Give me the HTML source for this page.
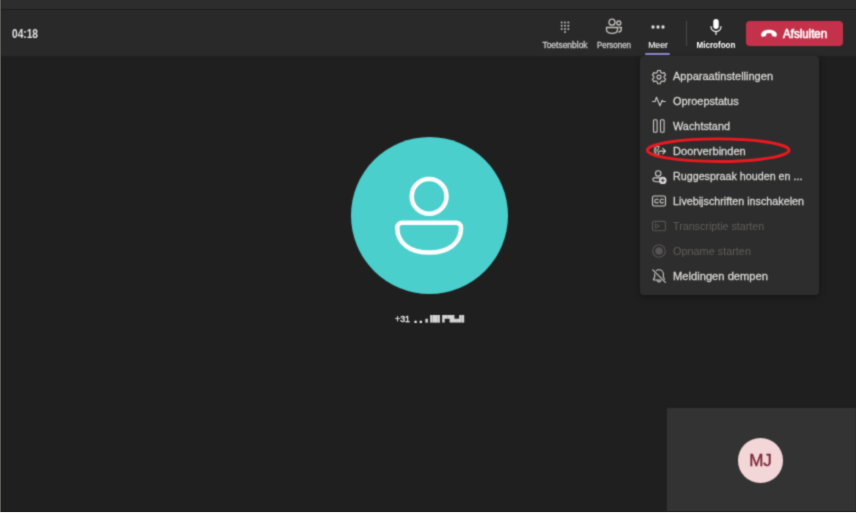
<!DOCTYPE html>
<html lang="nl">
<head>
<meta charset="utf-8">
<title>Teams gesprek</title>
<style>
*{box-sizing:border-box;margin:0;padding:0}
html,body{position:relative;width:857px;height:513px;overflow:hidden;background:#1f1f1f;font-family:"Liberation Sans",sans-serif;}
#root{position:relative;width:857px;height:513px;background:#1f1f1f;overflow:hidden;filter:url(#soft)}
.abs{position:absolute}
#topband{left:0;top:0;width:857px;height:9px;background:#2d2d2d}
#topline{left:0;top:8.800px;width:857px;height:1.700px;background:#1c1c1c}
#header{left:0;top:10px;width:857px;height:46.300px;background:#292929}
#leftedge{left:0;top:0;width:1px;height:513px;background:#5c5c59}
#rightedge{left:856px;top:0;width:1px;height:513px;background:#fff}
#bottomedge{left:0;top:512px;width:857px;height:1px;background:#f0f0f0}
#bottomshadow{left:1px;top:511px;width:855px;height:1px;background:#202020}
#timer{left:12px;top:27px;font-size:12px;font-weight:bold;color:#e4e4e4;line-height:14px;transform:scaleX(0.847);transform-origin:0 50%}
.tb{position:absolute;top:39.500px;font-size:8.4px;color:#cacaca;-webkit-text-stroke:0.3px #cacaca;line-height:10px;text-align:center;white-space:nowrap;transform:translateX(-50%)}
.tb.b{color:#fff;font-weight:bold;-webkit-text-stroke:0}
#underline{left:645px;top:53px;width:25px;height:2px;background:#8b8cd8;border-radius:1px}
#divider{left:685.500px;top:21px;width:1px;height:25px;background:#484848}
#endbtn{left:746px;top:21px;width:97.200px;height:25px;background:#c4314b;border-radius:4px}
#endtxt{left:783px;top:27px;font-size:12px;font-weight:normal;-webkit-text-stroke:0.6px #fff;color:#fff;line-height:14px;transform:scaleX(0.960);transform-origin:0 50%}
#menu{left:640px;top:55.500px;width:179px;height:239px;background:#2d2d2d;border-radius:4px;box-shadow:0 2px 6px rgba(0,0,0,.35)}
.mi{position:absolute;left:673px;font-size:11.5px;color:#dcdbd9;line-height:14px;white-space:nowrap;font-weight:normal;-webkit-text-stroke:0.28px #dcdbd9;transform-origin:0 50%}
.mi.dis{color:#605e5c;font-weight:normal;-webkit-text-stroke:0}
.ic{position:absolute;left:651px;width:16px;height:16px}
#avatar{left:351px;top:137px;width:157px;height:157px;border-radius:50%;background:#4bcfcc}
#phone{left:395px;top:314px;font-size:8.5px;color:#ececec;-webkit-text-stroke:0.35px #ececec;line-height:10px;white-space:nowrap;transform:scaleX(1.033);transform-origin:0 50%}
#dots{left:413.400px;top:309.800px;font-size:15px;font-weight:bold;color:#f4f4f4;line-height:16px;white-space:nowrap;word-spacing:-3.100px}
#blocks{left:422.600px;top:314px;font-size:6.400px;color:#d4d4d4;line-height:10px;white-space:nowrap;font-family:"DejaVu Sans",sans-serif;transform:scaleX(0.983);transform-origin:0 50%}
#self{left:667px;top:408px;width:189px;height:104px;background:#333333}
#mj{left:738.200px;top:438.300px;width:44.500px;height:44.500px;border-radius:50%;background:#f3d6d8}
#mjt{left:738px;top:438px;width:45px;height:45px;color:#7a2a38;-webkit-text-stroke:0.35px #7a2a38;font-size:15.800px;text-align:center;line-height:46.500px;transform:scaleX(1.080)}
</style>
</head>
<body>
<svg width="0" height="0" style="position:absolute"><filter id="soft" x="0" y="0" width="100%" height="100%" color-interpolation-filters="sRGB"><feConvolveMatrix order="3" kernelMatrix="0.0322 0.1151 0.0322 0.1151 0.4109 0.1151 0.0322 0.1151 0.0322" divisor="1" edgeMode="duplicate" preserveAlpha="true"/></filter></svg>
<div id="root">
  <div class="abs" id="topband"></div>
  <div class="abs" id="topline"></div>
  <div class="abs" id="header"></div>

  <div class="abs" id="timer">04:18</div>

  <!-- Toetsenblok icon -->
  <svg class="abs" style="left:558px;top:20px" width="14" height="16" viewBox="0 0 14 16">
    <g fill="#bdbdbd">
      <circle cx="3.700" cy="2.5" r="1"/><circle cx="7" cy="2.5" r="1"/><circle cx="10.300" cy="2.5" r="1"/>
      <circle cx="3.700" cy="5.7" r="1"/><circle cx="7" cy="5.7" r="1"/><circle cx="10.300" cy="5.7" r="1"/>
      <circle cx="3.700" cy="8.9" r="1"/><circle cx="7" cy="8.9" r="1"/><circle cx="10.300" cy="8.9" r="1"/>
      <circle cx="7" cy="12.1" r="1"/>
    </g>
  </svg>
  <div class="tb" style="left:565px;transform:translateX(-50%) scaleX(1.010)">Toetsenblok</div>

  <!-- Personen icon -->
  <svg class="abs" style="left:604px;top:18px" width="20" height="17" viewBox="0 0 20 17">
    <g fill="none" stroke="#c6c4c0" stroke-width="1.3">
      <circle cx="8" cy="4.2" r="3"/>
      <circle cx="14.8" cy="5" r="2"/>
      <path d="M2.5 9.5h11v2.2c0 2-2 3.6-5.5 3.6s-5.500-1.600-5.500-3.600z" stroke-linejoin="round"/>
      <path d="M14.500 9.500h2.800v1.800c0 1.500-1.200 2.700-3 2.900"/>
    </g>
  </svg>
  <div class="tb" style="left:614px;transform:translateX(-50%) scaleX(0.950)">Personen</div>

  <!-- Meer -->
  <svg class="abs" style="left:649.700px;top:24px" width="16" height="6" viewBox="0 0 16 6">
    <g fill="#e0e0e0"><circle cx="3" cy="3" r="1.650"/><circle cx="8" cy="3" r="1.650"/><circle cx="13" cy="3" r="1.650"/></g>
  </svg>
  <div class="tb" style="left:657.800px;color:#f0f0f0;-webkit-text-stroke:0.15px #f0f0f0;transform:translateX(-50%) scaleX(1.030)">Meer</div>
  <div class="abs" id="underline"></div>
  <div class="abs" id="divider"></div>

  <!-- Microfoon -->
  <svg class="abs" style="left:709px;top:18px" width="14" height="18" viewBox="0 0 14 18">
    <rect x="4.300" y="1" width="5.400" height="10" rx="2.700" fill="#fff"/>
    <path d="M2 8.500c0 3 2.200 5 5 5s5-2 5-5" fill="none" stroke="#fff" stroke-width="1.200" stroke-linecap="round"/>
    <path d="M7 13.500v3" stroke="#fff" stroke-width="1.200" stroke-linecap="round"/>
  </svg>
  <div class="tb b" style="left:716.300px;transform:translateX(-50%) scaleX(0.960)">Microfoon</div>

  <!-- Afsluiten -->
  <div class="abs" id="endbtn"></div>
  <svg class="abs" style="left:760px;top:27.600px" width="18" height="11" viewBox="0 0 18 10" preserveAspectRatio="none">
    <path d="M1.200 6.200C1 3.500 4.500 1.500 9 1.500s8 2 7.800 4.700c-.1 1.300-.7 2-1.700 1.800l-2.200-.4c-.8-.2-1.200-.8-1.200-1.600V5.200c-1.700-.6-3.700-.6-5.400 0V6c0 .8-.4 1.400-1.200 1.600l-2.200.4c-1 .2-1.600-.5-1.700-1.800z" fill="#fff"/>
  </svg>
  <div class="abs" id="endtxt">Afsluiten</div>

  <!-- Menu -->
  <div class="abs" id="menu"></div>

  <!-- gear -->
  <svg class="ic" style="top:68.500px" viewBox="0 0 16 16">
    <path d="M6.600 1.500h2.800l.5 2 1.300.7 2-.6 1.400 2.400-1.500 1.400v1.400l1.500 1.400-1.400 2.400-2-.6-1.300.7-.5 2H6.600l-.5-2-1.300-.7-2 .6-1.400-2.400 1.500-1.400V7.400L1.400 6l1.400-2.400 2 .6 1.300-.7z" fill="none" stroke="#cfcdc9" stroke-width="1.100" stroke-linejoin="round"/>
    <circle cx="8" cy="8.100" r="2" fill="none" stroke="#cfcdc9" stroke-width="1.100"/>
  </svg>
  <div class="mi" style="top:69px;transform:scaleX(0.96)">Apparaatinstellingen</div>

  <!-- pulse -->
  <svg class="ic" style="top:93px" viewBox="0 0 16 16">
    <path d="M1.600 8.500H4L5.500 4.300L8.900 12.700L11.200 7.200L12 8.500H14.300" fill="none" stroke="#cfcdc9" stroke-width="1.100" stroke-linejoin="round" stroke-linecap="round"/>
  </svg>
  <div class="mi" style="top:94px;transform:scaleX(0.951)">Oproepstatus</div>

  <!-- pause -->
  <svg class="ic" style="top:118px" viewBox="0 0 16 16">
    <rect x="2.500" y="1.800" width="3.600" height="12.400" rx="1" fill="none" stroke="#cfcdc9" stroke-width="1.100"/>
    <rect x="9.500" y="1.800" width="3.600" height="12.400" rx="1" fill="none" stroke="#cfcdc9" stroke-width="1.100"/>
  </svg>
  <div class="mi" style="top:119px;transform:scaleX(0.945)">Wachtstand</div>

  <!-- transfer -->
  <svg class="ic" style="top:143px" viewBox="0 0 16 16">
    <path d="M8.200 3.600C5 2.900 3.300 3.900 3.300 7.400C3.300 10.900 5 11.900 8.200 11.200L6.600 7.400Z" fill="none" stroke="#cfcdc9" stroke-width="1" stroke-linejoin="round"/>
    <path d="M4.900 4.900V9.900" fill="none" stroke="#cfcdc9" stroke-width="1" stroke-linecap="round"/>
    <path d="M8.400 8.100H14.200M11.800 5.400L14.500 8.100L11.800 10.800" fill="none" stroke="#d6d4d0" stroke-width="1.100" stroke-linecap="round" stroke-linejoin="round"/>
  </svg>
  <div class="mi" style="top:144px;transform:scaleX(0.965)">Doorverbinden</div>
  <!-- red ellipse annotation -->
  <svg class="abs" style="left:640px;top:134px" width="160" height="34" viewBox="0 0 160 34">
    <ellipse cx="78.200" cy="16.200" rx="70.800" ry="11.300" fill="none" stroke="#ee1820" stroke-width="2.900"/>
  </svg>

  <!-- consult -->
  <svg class="ic" style="top:168px" viewBox="0 0 16 16">
    <circle cx="7.200" cy="5.400" r="2.700" fill="none" stroke="#cfcdc9" stroke-width="1.100"/>
    <path d="M8.500 9.900H3.300C2.400 9.900 1.800 10.500 1.800 11.300C1.800 12.900 3.400 13.700 6 13.700H8" fill="none" stroke="#cfcdc9" stroke-width="1.100" stroke-linecap="round"/>
    <circle cx="11.800" cy="12.400" r="3.700" fill="#dddbd8"/>
    <path d="M11.800 10.500v3.800M9.900 12.400h3.800" stroke="#2e2e2e" stroke-width="1"/>
  </svg>
  <div class="mi" style="top:169px;transform:scaleX(0.933)">Ruggespraak houden en ...</div>

  <!-- cc -->
  <svg class="ic" style="top:193px" viewBox="0 0 16 16">
    <rect x="1.500" y="3" width="13" height="10" rx="1.800" fill="none" stroke="#cfcdc9" stroke-width="1.100"/>
    <path d="M7 6.700c-.4-.5-.9-.7-1.500-.7-1 0-1.800.8-1.800 2s.8 2 1.800 2c.6 0 1.100-.2 1.500-.7M12.300 6.700c-.4-.5-.9-.7-1.500-.7-1 0-1.800.8-1.800 2s.8 2 1.800 2c.6 0 1.100-.2 1.500-.7" fill="none" stroke="#cfcdc9" stroke-width="1.100" stroke-linecap="round"/>
  </svg>
  <div class="mi" style="top:194px;transform:scaleX(0.936)">Livebijschriften inschakelen</div>

  <!-- transcript (disabled) -->
  <svg class="ic" style="top:218px" viewBox="0 0 16 16">
    <rect x="1.500" y="3.400" width="13" height="9.400" rx="1.800" fill="none" stroke="#575552" stroke-width="1.100"/>
    <path d="M4.300 5.600v4.800l4-2.400z" fill="none" stroke="#575552" stroke-width="1" stroke-linejoin="round"/>
  </svg>
  <div class="mi dis" style="top:219px;transform:scaleX(0.931)">Transcriptie starten</div>

  <!-- record (disabled) -->
  <svg class="ic" style="top:243px" viewBox="0 0 16 16">
    <circle cx="8" cy="8" r="6.300" fill="none" stroke="#575552" stroke-width="1.100"/>
    <circle cx="8" cy="8" r="3.800" fill="#575552"/>
  </svg>
  <div class="mi dis" style="top:244px;transform:scaleX(0.945)">Opname starten</div>

  <!-- bell off -->
  <svg class="ic" style="top:268px" viewBox="0 0 16 16">
    <path d="M8 1.800c-2.500 0-4.300 1.900-4.300 4.300v3L2.500 11.200c-.2.400 0 .8.500.8h10c.5 0 .7-.4.500-.8L12.300 9.100v-3C12.300 3.700 10.500 1.800 8 1.800z" fill="none" stroke="#cfcdc9" stroke-width="1.100" stroke-linejoin="round"/>
    <path d="M6.300 12.200c.1 1 .8 1.700 1.700 1.700s1.600-.7 1.700-1.700" fill="none" stroke="#cfcdc9" stroke-width="1.100"/>
    <path d="M1.800 1.800l12.600 12.600" stroke="#2e2e2e" stroke-width="2.600"/>
    <path d="M1.800 1.800l12.600 12.600" stroke="#cfcdc9" stroke-width="1.100" stroke-linecap="round"/>
  </svg>
  <div class="mi" style="top:269px;transform:scaleX(0.971)">Meldingen dempen</div>

  <!-- Avatar -->
  <div class="abs" id="avatar"></div>
  <svg class="abs" style="left:388px;top:170px" width="82" height="90" viewBox="0 0 82 90">
    <circle cx="41.150" cy="26.400" r="17.400" fill="none" stroke="#fff" stroke-width="4.500"/>
    <path d="M14.250 52.750H68.050a5 5 0 0 1 5 5C73.050 72.500 61 82.550 41.150 82.550S9.250 72.500 9.250 57.750a5 5 0 0 1 5-5z" fill="none" stroke="#fff" stroke-width="4.500" stroke-linejoin="round"/>
  </svg>
  <div class="abs" id="phone">+31</div>
  <div class="abs" id="dots">. .</div>
  <div class="abs" id="blocks">&#x2597;&#x2590;&#x2588;&#x258C;&#x259B;&#x259C;&#x2599;&#x259F;&#x258C;</div>

  <!-- self view -->
  <div class="abs" id="self"></div>
  <div class="abs" id="mj"></div>
  <div class="abs" id="mjt">MJ</div>

  <div class="abs" id="bottomshadow"></div>
</div>
<div class="abs" id="leftedge"></div>
<div class="abs" id="rightedge"></div>
<div class="abs" id="bottomedge"></div>
</body>
</html>
